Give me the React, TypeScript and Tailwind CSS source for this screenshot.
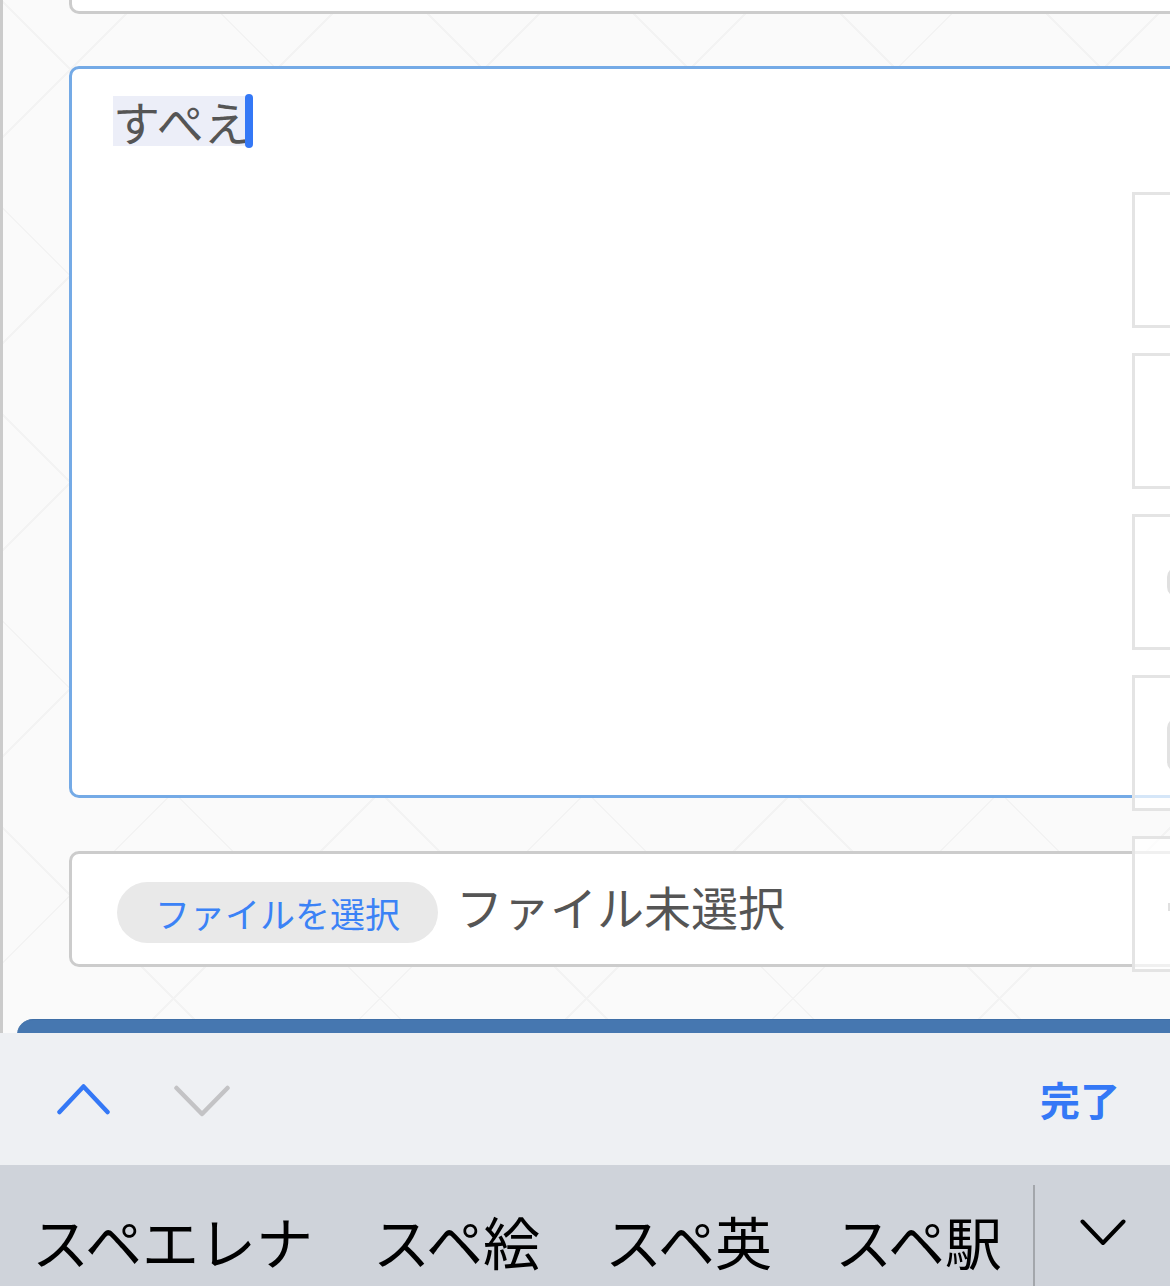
import React from "react";

const JP = { fontFamily: '"Noto Sans CJK JP", "Noto Sans", sans-serif' };

export default function App() {
  return (
    <div className="w-[1170px] h-[1286px] overflow-hidden flex flex-col bg-white" style={JP}>
      {/* page area */}
      <div className="relative h-[1033px] shrink-0 overflow-hidden border-l-[3px] border-[#cbcbcb] bg-[#fafafa] bg-[image:repeating-linear-gradient(45deg,transparent_0,transparent_144px,#f3f3f3_144px,#f3f3f3_146px),repeating-linear-gradient(-45deg,transparent_0,transparent_144px,#f3f3f3_144px,#f3f3f3_146px)]">
        <div className="pl-[66px]">
          <div className="-mr-[40px]">
            {/* top input (cut off) */}
            <div className="h-[14px] bg-white border-x-[3px] border-b-[3px] border-[#cccccc] rounded-b-[10px]" />

            {/* textarea */}
            <div className="mt-[52px] h-[732px] bg-white border-[3px] border-[#74aae6] rounded-[10px] pl-[41px] pt-[25px]">
              <div className="flex items-center h-[54px]">
                <span className="inline-block h-[50px] leading-[50px] text-[47px] text-[#555555] bg-[#eceef8]">すぺえ</span>
                <span className="inline-block w-[8px] h-[54px] -ml-[6px] rounded-full bg-[#3478f6]" />
              </div>
            </div>

            {/* file input */}
            <div className="mt-[53px] h-[116px] bg-white border-[3px] border-[#cccccc] rounded-[10px] flex items-center pl-[45px] pt-[6px]">
              <div className="h-[61px] w-[321px] rounded-full bg-[#e9e9e9] flex items-center justify-center text-[35px] leading-none text-[#3b82f6]">
                ファイルを選択
              </div>
              <span className="ml-[18px] -mt-[14px] text-[47px] leading-none text-[#555555]">ファイル未選択</span>
            </div>
          </div>
        </div>

        {/* blue button top */}
        <div className="mt-[52px] ml-[14px] h-[20px] rounded-tl-[16px] bg-[#4677b0] border-t border-[#3f6ea6]" />

        {/* translucent overlay column at right edge */}
        <div className="absolute top-[192px] left-[1129px] w-[60px] flex flex-col gap-[25px]">
          {[0, 1, 2, 3, 4].map((i) => (
            <div key={i} className="relative h-[136px] border-[3px] border-[#e4e4e4] bg-white/70 overflow-hidden">
              {i === 2 && <div className="absolute left-[32px] top-[50px] w-[20px] h-[30px] rounded-full border-[3px] border-[#e0e0e0]" />}
              {i === 3 && <div className="absolute left-[32px] top-[40px] w-[24px] h-[54px] rounded-[10px] bg-[#e2e2e2]" />}
              {i === 4 && <div className="absolute left-[33px] top-[64px] w-[6px] h-[8px] bg-[#e0e0e0]" />}
            </div>
          ))}
        </div>
      </div>

      {/* keyboard accessory toolbar */}
      <div className="h-[132px] shrink-0 bg-[#eef0f3] flex items-center pl-[57px] pr-[50px]">
        <svg width="53" height="31" viewBox="0 0 53 31" fill="none">
          <polyline points="2.5,28 26.5,2.5 50.5,28" stroke="#3478f6" strokeWidth="4.5" strokeLinecap="round" strokeLinejoin="round" />
        </svg>
        <svg className="ml-[64px] mt-[4px]" width="56" height="32" viewBox="0 0 56 32" fill="none">
          <polyline points="2.5,3 28,29 53.5,3" stroke="#c3c3c5" strokeWidth="4.5" strokeLinecap="round" strokeLinejoin="round" />
        </svg>
        <span className="ml-auto text-[40px] leading-none font-bold text-[#3478f6]">完了</span>
      </div>

      {/* candidate bar */}
      <div className="flex-1 bg-[#cfd3da] flex">
        <div className="w-[1033px] flex pl-[32px] pt-[47px] text-[57px] leading-[57px] text-black whitespace-nowrap">
          <span>スペエレナ</span>
          <span className="ml-[60px]">スペ絵</span>
          <span className="ml-[65px]">スペ英</span>
          <span className="ml-[63px]">スペ駅</span>
        </div>
        <div className="w-[2px] mt-[20px] bg-[#a3a6ab]" />
        <div className="flex-1 flex justify-center pt-[54px]">
          <svg width="46" height="27" viewBox="0 0 46 27" fill="none">
            <polyline points="2.5,2.5 23,24 43.5,2.5" stroke="#000" strokeWidth="4" strokeLinecap="round" strokeLinejoin="round" />
          </svg>
        </div>
      </div>
    </div>
  );
}
